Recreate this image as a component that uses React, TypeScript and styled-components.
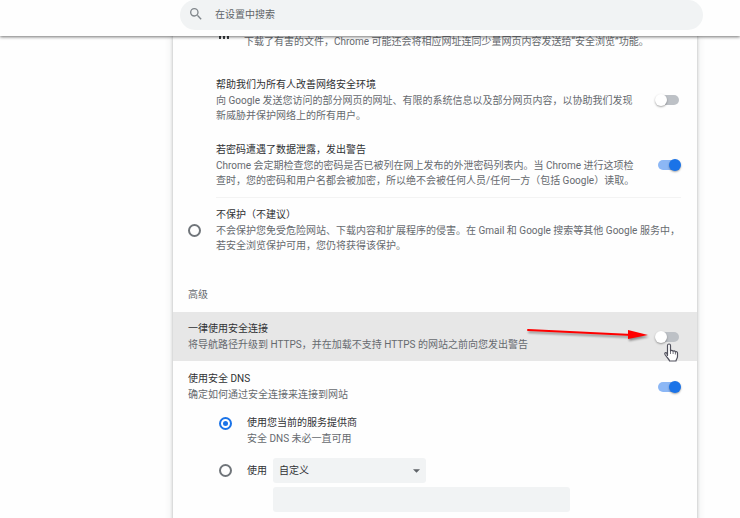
import React, { useState } from "react";
import styled, { createGlobalStyle } from "styled-components";

const GlobalStyle = createGlobalStyle`
  *, *::before, *::after { box-sizing: border-box; }
  html, body { margin: 0; padding: 0; background: #fefefe; }
  body {
    font-family: Roboto, "Noto Sans CJK SC", sans-serif;
    font-size: 10px;
    line-height: 15px;
    color: #666a6f;
    overflow: hidden;
  }
  input, select { font: inherit; color: inherit; margin: 0; border: 0; outline: 0; }
`;

const Page = styled.div`
  min-height: 100vh;
`;

const Header = styled.header`
  position: sticky;
  top: 0;
  z-index: 2;
  height: 36px;
  padding: 0 37px 0 180px;
  background: #fefefe;
  box-shadow: 0 1px 3px rgba(0, 0, 0, 0.55);
`;

const SearchBox = styled.label`
  display: flex;
  align-items: center;
  gap: 13px;
  height: 30px;
  padding: 0 10px 2px;
  border-radius: 15px;
  background: #f1f3f4;

  svg {
    flex: none;
    width: 12px;
    height: 12px;
    fill: #80868b;
  }
`;

const SearchInput = styled.input`
  flex: 1;
  min-width: 0;
  padding: 0;
  background: transparent;

  &::placeholder {
    color: #5f6368;
    opacity: 1;
  }
`;

const Card = styled.main`
  margin: -2px 43px 0 173px;
  padding-bottom: 16px;
  background: #fefefe;
  box-shadow: 0 0 3px rgba(60, 64, 67, 0.3), 0 1px 8px rgba(60, 64, 67, 0.15);
`;

const Bullet = styled.div`
  display: flex;
  align-items: flex-start;
  gap: 15px;
  padding: 0 15px 0 46px;

  svg {
    flex: none;
    width: 10px;
    height: 5px;
    fill: #3c4043;
  }
`;

const Option = styled.div<{ $top: number; $indent?: boolean }>`
  display: flex;
  align-items: center;
  gap: 15px;
  margin-top: ${(p) => p.$top}px;
  padding: 0 18px 0 ${(p) => (p.$indent ? 43 : 15)}px;
`;

const Divider = styled.hr`
  margin: 9px 16px 0 43px;
  border: 0;
  border-top: 1px solid #f3f3f3;
`;

const Texts = styled.label`
  display: block;
  flex: 1;
  min-width: 0;
`;

const Title = styled.span`
  display: block;
  line-height: 16px;
  color: #303134;
`;

const Description = styled.span`
  display: block;
`;

const Line = styled.span`
  display: block;
  white-space: nowrap;
`;

const SectionLabel = styled.h2`
  margin: 34px 15px 9px;
  font-size: 10px;
  font-weight: 400;
  line-height: 16px;
`;

const HoveredRow = styled.div`
  position: relative;
  display: flex;
  align-items: center;
  gap: 15px;
  padding: 9px 18px 9px 15px;
  background: #e7e7e7;
`;

const Toggle = styled.input.attrs({ type: "checkbox", role: "switch" })`
  appearance: none;
  position: relative;
  flex: none;
  width: 21px;
  height: 10px;
  border-radius: 5px;
  background: #bdc1c6;

  &::before {
    content: "";
    position: absolute;
    top: -1px;
    left: -3px;
    width: 12px;
    height: 12px;
    border-radius: 50%;
    background: #fff;
    box-shadow: 0 1px 2px rgba(0, 0, 0, 0.35);
  }

  &:checked {
    background: #8cb7f5;
  }

  &:checked::before {
    left: 11px;
    background: #1a73e8;
  }
`;

const Radio = styled.input.attrs({ type: "radio" })`
  appearance: none;
  flex: none;
  display: grid;
  place-items: center;
  width: 13px;
  height: 13px;
  border: 2px solid #70757a;
  border-radius: 50%;

  &:checked {
    border-color: #1a73e8;
  }

  &:checked::before {
    content: "";
    width: 5px;
    height: 5px;
    border-radius: 50%;
    background: #1a73e8;
  }
`;

const ArrowMark = styled.svg`
  position: absolute;
  top: 12px;
  right: 45px;
  width: 126px;
  height: 24px;
  overflow: visible;
  pointer-events: none;
  filter: drop-shadow(1px 2px 1px rgba(0, 0, 0, 0.4));
`;

const HandCursor = styled.svg`
  position: absolute;
  top: 31px;
  right: 18px;
  width: 16px;
  height: 20px;
  pointer-events: none;
`;

const DnsChoices = styled.div`
  display: flex;
  flex-direction: column;
  margin: 13px 18px 0 46px;
`;

const Choice = styled.div<{ $top?: boolean }>`
  display: flex;
  align-items: ${(p) => (p.$top ? "flex-start" : "center")};
  gap: 15px;

  > input {
    margin-top: ${(p) => (p.$top ? 2 : 0)}px;
  }
`;

const CustomRow = styled(Choice)`
  margin-top: 12px;
`;

const CustomControls = styled.div`
  display: flex;
  align-items: center;
  gap: 6px;
  color: #303134;
`;

const SelectWrap = styled.div`
  display: grid;
  align-items: center;
  width: 153px;

  > * {
    grid-area: 1 / 1;
  }

  svg {
    justify-self: end;
    width: 7px;
    height: 4px;
    margin-right: 6px;
    fill: #5f6368;
    pointer-events: none;
  }
`;

const Select = styled.select`
  appearance: none;
  width: 100%;
  height: 25px;
  padding: 0 6px;
  border-radius: 3px;
  background: #f1f3f4;
`;

const ProviderInput = styled.input`
  width: 297px;
  max-width: 100%;
  height: 25px;
  margin: 4px 0 0 54px;
  padding: 0 6px;
  border-radius: 3px;
  background: #f1f3f4;
`;

interface OptionProps {
  id: string;
  title: string;
  lines: string[];
  on?: boolean;
}

const OptionTexts = ({ id, title, lines }: OptionProps) => (
  <Texts htmlFor={id}>
    <Title>{title}</Title>
    <Description>
      {lines.map((line) => (
        <Line key={line}>{line}</Line>
      ))}
    </Description>
  </Texts>
);

const ToggleOption = (props: OptionProps) => (
  <>
    <OptionTexts {...props} />
    <Toggle id={props.id} defaultChecked={props.on} />
  </>
);

export default function App() {
  const [dns, setDns] = useState("current");

  return (
    <Page>
      <GlobalStyle />
      <Header>
        <SearchBox>
          <svg viewBox="3 3 18 18" aria-hidden="true">
            <path d="M15.5 14h-.79l-.28-.27A6.47 6.47 0 0 0 16 9.5 6.5 6.5 0 1 0 9.5 16c1.61 0 3.09-.59 4.23-1.57l.27.28v.79l5 4.99L20.49 19l-4.99-5zm-6 0a4.5 4.5 0 1 1 0-9 4.5 4.5 0 0 1 0 9z" />
          </svg>
          <SearchInput aria-label="在设置中搜索" placeholder="在设置中搜索" />
        </SearchBox>
      </Header>

      <Card>
        <Bullet>
          <svg viewBox="0 0 10 5" aria-hidden="true">
            <path d="M0 2h2v3H0zM4 2h2v3H4zM8 2h2v3H8z" />
          </svg>
          <Line>下载了有害的文件，Chrome 可能还会将相应网址连同少量网页内容发送给“安全浏览”功能。</Line>
        </Bullet>

        <Option $top={28} $indent>
          <ToggleOption
            id="improve"
            title="帮助我们为所有人改善网络安全环境"
            lines={[
              "向 Google 发送您访问的部分网页的网址、有限的系统信息以及部分网页内容，以协助我们发现",
              "新威胁并保护网络上的所有用户。",
            ]}
          />
        </Option>
        <Option $top={19} $indent>
          <ToggleOption
            id="leak"
            title="若密码遭遇了数据泄露，发出警告"
            lines={[
              "Chrome 会定期检查您的密码是否已被列在网上发布的外泄密码列表内。当 Chrome 进行这项检",
              "查时，您的密码和用户名都会被加密，所以绝不会被任何人员/任何一方（包括 Google）读取。",
            ]}
            on
          />
        </Option>
        <Divider />
        <Option $top={9}>
          <Radio id="unprotected" name="browsing" />
          <OptionTexts
            id="unprotected"
            title="不保护（不建议）"
            lines={[
              "不会保护您免受危险网站、下载内容和扩展程序的侵害。在 Gmail 和 Google 搜索等其他 Google 服务中，",
              "若安全浏览保护可用，您仍将获得该保护。",
            ]}
          />
        </Option>

        <SectionLabel>高级</SectionLabel>

        <HoveredRow>
          <ToggleOption
            id="https"
            title="一律使用安全连接"
            lines={["将导航路径升级到 HTTPS，并在加载不支持 HTTPS 的网站之前向您发出警告"]}
          />
          <ArrowMark viewBox="0 0 126 24" aria-hidden="true">
            <path d="M2 6 L106 11" fill="none" stroke="#f00" strokeWidth="2" strokeLinecap="round" />
            <path d="M102 6 L122 11 L102 15 Z" fill="#f00" />
          </ArrowMark>
          <HandCursor viewBox="0 0 16 20" aria-hidden="true">
            <path
              d="M4.5 12.5V2.5a1.5 1.5 0 0 1 3 0V8c.3-1 2.3-1 2.6.3.4-.8 2-.6 2.3.6.7-.6 2.1-.2 2.1 1.1v3.5c0 2-1.5 2.8-1.5 4.5H6.5c0-1.8-2.3-2.8-4.5-6.5-.8-1.5.8-2.5 1.7-1.4z"
              fill="#fff"
              stroke="#50505c"
              strokeWidth="1.2"
              strokeLinejoin="round"
            />
            <path d="M7.5 8v3M10.1 8.5V11M12.4 9v2.5" stroke="#50505c" strokeWidth="0.8" fill="none" />
          </HandCursor>
        </HoveredRow>

        <Option $top={10}>
          <ToggleOption
            id="dns"
            title="使用安全 DNS"
            lines={["确定如何通过安全连接来连接到网站"]}
            on
          />
        </Option>

        <DnsChoices>
          <Choice $top>
            <Radio
              id="dns-current"
              name="dns-provider"
              checked={dns === "current"}
              onChange={() => setDns("current")}
            />
            <OptionTexts
              id="dns-current"
              title="使用您当前的服务提供商"
              lines={["安全 DNS 未必一直可用"]}
            />
          </Choice>
          <CustomRow>
            <Radio
              id="dns-custom"
              name="dns-provider"
              checked={dns === "custom"}
              onChange={() => setDns("custom")}
            />
            <CustomControls>
              <label htmlFor="dns-custom">使用</label>
              <SelectWrap>
                <Select aria-label="服务提供商" defaultValue="custom">
                  <option value="custom">自定义</option>
                </Select>
                <svg viewBox="0 0 8 4" aria-hidden="true">
                  <path d="M0 0h8L4 4z" />
                </svg>
              </SelectWrap>
            </CustomControls>
          </CustomRow>
          <ProviderInput aria-label="自定义服务提供商" />
        </DnsChoices>
      </Card>
    </Page>
  );
}
